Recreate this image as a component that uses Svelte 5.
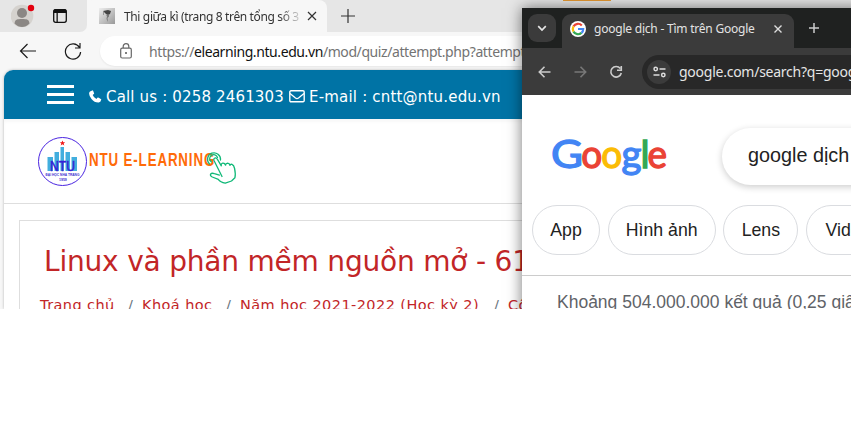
<script>
  const crumbs = [
    { label: 'Trang chủ', width: 74 },
    { label: 'Khoá học', width: 70 },
    { label: 'Năm học 2021-2022 (Học kỳ 2)', width: 240 },
    { label: 'Công nghệ thông tin', width: 170 }
  ];
  const chips = [
    { label: 'App', width: 68 },
    { label: 'Hình ảnh', width: 108 },
    { label: 'Lens', width: 75 },
    { label: 'Video', width: 84 }
  ];
</script>

<div class="desktop">
  <div class="task"></div>
  <section class="edge">
    <div class="strip">
      <div class="strip-left">
        <svg width="24" height="26" viewBox="0 0 24 26">
          <circle cx="11" cy="14" r="11.3" fill="#d5d2ce" />
          <circle cx="11" cy="11" r="5" fill="#8b8784" />
          <path d="M3.500 21.500C4 17.500 6 17 11 17s7 .5 7.500 4.500Q15 25 11 25t-7.500-3.500Z" fill="#8b8784" />
          <circle cx="20" cy="6" r="3.200" fill="#e3000f" />
        </svg>
        <svg class="workspace" width="16" height="16" viewBox="0 0 16 16">
          <rect x="1.700" y="1.700" width="12.600" height="12.600" rx="2" fill="none" stroke="#111" stroke-width="1.300" />
          <path d="M1.500 5V3q0-2 2-2h9q2 0 2 2v2ZM4.500 5h1.300v9H4.500Z" fill="#111" />
        </svg>
      </div>
      <div class="tab">
        <svg width="16" height="16" viewBox="0 0 16 16">
          <defs><linearGradient id="thumb" x2="1" y2="1"><stop stop-color="#eee" /><stop offset="1" stop-color="#999" /></linearGradient></defs>
          <path fill="url(#thumb)" d="M0 0h16v16H0z" />
          <path d="m4 3 5-1 3 1-1 3-2 1-2-1Z" fill="#444" />
          <path d="m7 7 3-.5v2L8.500 10 9 14l-1.500-3 .5-3Z" fill="#777" />
          <path d="M4.500 3v4" stroke="#888" stroke-width=".8" />
        </svg>
        <span class="tab-title">Thi giữa kì (trang 8 trên tổng số 3</span>
        <svg class="close" width="10" height="10" viewBox="0 0 10 10"><path d="M1 1l8 8M9 1 1 9" stroke="#333" stroke-width="1.200" /></svg>
      </div>
      <svg class="new" width="14" height="14" viewBox="0 0 14 14"><path d="M7 0v14M0 7h14" stroke="#333" stroke-width="1.200" /></svg>
    </div>
    <div class="address">
      <svg width="18" height="16" viewBox="0 0 18 16"><path d="M17 8H2M8.500 1 1.500 8l7 7" fill="none" stroke="#1b1b1b" stroke-width="1.200" /></svg>
      <svg class="reload" width="18" height="18" viewBox="0 0 18 18"><path d="M15.500 5.500A7.600 7.600 0 1 0 16.600 10M16 1v5h-5" fill="none" stroke="#1b1b1b" stroke-width="1.200" /></svg>
      <div class="url">
        <svg width="12" height="16" viewBox="0 0 12 16"><rect x=".7" y="5.200" width="10.600" height="9.800" rx="1.500" fill="none" stroke="#666" stroke-width="1.200" /><path d="M3.200 5V3.500a2.800 2.800 0 0 1 5.600 0V5" fill="none" stroke="#666" stroke-width="1.200" /><circle cx="6" cy="10" r="1" fill="#555" /></svg>
        <span>https://<b>elearning.ntu.edu.vn</b>/mod/quiz/attempt.php?attempt</span>
      </div>
    </div>
    <main class="site">
      <div class="contact">
        <div class="burger"><i></i><i></i><i></i></div>
        <svg class="phone" width="13" height="13" viewBox="0 0 13 13"><path d="M1 1.500 3.200.4q.6-.2.900.4l1 2.400q.2.500-.3.900l-1.100.9q1 2.700 3.700 3.900l1-1.100q.4-.5.900-.2l2.500 1.300q.6.300.4.900-.5 2.400-2.500 2.700Q5.500 12.700 2.500 9-.7 5 .4 2.300Z" fill="#fff" /></svg>
        <span class="call">Call us : 0258 2461303</span>
        <svg class="mail" width="16" height="13" viewBox="0 0 16 13"><rect x=".8" y=".8" width="14.400" height="11" rx="1.200" fill="none" stroke="#fff" stroke-width="1.400" /><path d="M1 3.500 6.500 8q1.500 1.100 3 0L15 3.500" fill="none" stroke="#fff" stroke-width="1.300" /></svg>
        <span class="email">E-mail : cntt@ntu.edu.vn</span>
      </div>
      <header>
        <svg width="202" height="54" viewBox="0 0 202 54">
          <circle cx="24.500" cy="25.500" r="24" fill="#fff" stroke="#4a25e0" stroke-width="1" />
          <path d="M9.500 35V21H15v14ZM16.500 35V16H21v19ZM22.500 35V11H26v24ZM27.500 35V16H32v19ZM33.500 35V21H39v14Z" fill="#42aede" />
          <path d="m24.500 4.500.8 1.700 1.900.1-1.500 1.200.6 1.900-1.800-1.100-1.800 1.100.6-1.900-1.500-1.200 1.900-.1Z" fill="#f01818" />
          <text x="12" y="34.500" font-size="14" fill="#371ed5" stroke="#371ed5" stroke-width=".5" textLength="25" lengthAdjust="spacingAndGlyphs">NTU</text>
          <text x="7.500" y="40" font-size="4.300" font-weight="700" fill="#4030d0" textLength="34" lengthAdjust="spacingAndGlyphs">ĐẠI HỌC NHA TRANG</text>
          <text x="21" y="44.500" font-size="3.500" font-weight="700" fill="#4030d0">1959</text>
          <g transform="translate(51 29.700) scale(.72 1)"><text font-size="18.500" font-weight="700" fill="#ff6b09" textLength="174" lengthAdjust="spacing">NTU E-LEARNING</text></g>
          <g fill="none" stroke="#10b978" stroke-width="1.300" stroke-linejoin="round" stroke-linecap="round">
            <path d="M171.500 28a6.500 6.500 0 1 1 11-4M173.500 26a4 4 0 1 1 6-4.500" />
            <path d="m184 41-8-16q-.7-2 1-2.500 1.500-.3 2.300 1.200l4 6.600q-.4-2.300 1.400-2.600 2.100-.2 2.900 2 .2-2 2-2 1.900.1 2.400 2.200.5-1.500 2-1 1.900.8 2.600 4.100 1.200 6 .3 9.300l-3.400 3.200-6.200 2.200q-5-1-7-3.900l-6-2.300q-2.700-1.400-1.600-3 1-1.300 3.700-.4l5 1.500" transform="translate(0 -.5)" />
          </g>
        </svg>
      </header>
      <article>
        <h1>Linux và phần mềm nguồn mở - 61</h1>
        <nav>
          {#each crumbs as crumb, i}
            {#if i}<span class="slash">/</span>{/if}
            <span class="crumb" style:width="{crumb.width}px">{crumb.label}</span>
          {/each}
        </nav>
      </article>
    </main>
  </section>

  <section class="chrome">
    <div class="chrome-strip">
      <div class="tab-search"><svg width="10" height="7" viewBox="0 0 10 7"><path d="m1.200 1.200 3.800 3.800 3.800-3.800" fill="none" stroke="#e5e5e5" stroke-width="1.700" /></svg></div>
      <div class="chrome-tab">
        <svg width="16" height="16" viewBox="0 0 16 16">
          <circle cx="8" cy="8" r="8" fill="#fff" />
          <g fill="none" stroke-width="2.200">
            <path d="M3.500 5.400A5.200 5.200 0 0 1 11.800 4.400" stroke="#ea4335" />
            <path d="M3.500 5.400a5.200 5.200 0 0 0 0 5.200" stroke="#fbbc05" />
            <path d="M3.500 10.600a5.200 5.200 0 0 0 8 1.300" stroke="#34a853" />
            <path d="M8 8h5.200q0 2.500-1.700 3.900" stroke="#4285f4" />
          </g>
        </svg>
        <span>google dịch - Tìm trên Google</span>
        <svg class="chrome-close" width="8" height="8" viewBox="0 0 8 8"><path d="m.5.500 7 7M7.500.5l-7 7" stroke="#ddd" stroke-width="1.400" /></svg>
      </div>
      <svg class="chrome-new" width="10" height="10" viewBox="0 0 10 10"><path d="M5 0v10M0 5h10" stroke="#ccc" stroke-width="1.500" /></svg>
    </div>
    <div class="toolbar">
      <svg width="13" height="12" viewBox="0 0 13 12"><path d="M12.500 6H1.500M6.500.8 1.300 6l5.200 5.200" fill="none" stroke="#ccc" stroke-width="1.600" /></svg>
      <svg class="forward" width="13" height="12" viewBox="0 0 13 12"><path d="M.5 6h11M6.500.8 11.700 6l-5.200 5.200" fill="none" stroke="#787878" stroke-width="1.600" /></svg>
      <svg class="refresh" width="14" height="14" viewBox="0 0 14 14"><path d="M11.300 3.500A5.300 5.300 0 1 0 12.300 8M12.300 1v4.200H8" fill="none" stroke="#ccc" stroke-width="1.600" /></svg>
      <div class="omnibox">
        <div class="tune"><svg width="13" height="12" viewBox="0 0 13 12"><g fill="none" stroke="#ddd" stroke-width="1.500"><circle cx="2.700" cy="3" r="1.700" /><path d="M6.500 3h6M.5 9h6" /><circle cx="10.300" cy="9" r="1.700" /></g></svg></div>
        <span>google.com/search?q=goog</span>
      </div>
    </div>
    <div class="results">
      <div class="query-row">
        <svg width="116" height="42" viewBox="0 0 116 42">
          <g font-size="38.500" stroke-width="1.300">
            <text y="32" x="-2" fill="#4285f4" stroke="#4285f4" textLength="32" lengthAdjust="spacingAndGlyphs">G</text>
            <text y="32" x="28.300" fill="#ea4335" stroke="#ea4335" textLength="21" lengthAdjust="spacingAndGlyphs">o</text>
            <text y="32" x="48.300" fill="#fbbc05" stroke="#fbbc05" textLength="21" lengthAdjust="spacingAndGlyphs">o</text>
            <text y="32" x="68.500" fill="#4285f4" stroke="#4285f4" textLength="20" lengthAdjust="spacingAndGlyphs">g</text>
            <text y="32" x="87.500" fill="#34a853" stroke="#34a853">l</text>
            <text y="32" x="94.500" fill="#ea4335" stroke="#ea4335" textLength="19.500" lengthAdjust="spacingAndGlyphs">e</text>
          </g>
        </svg>
        <div class="search">google dịch</div>
      </div>
      <div class="chips">
        {#each chips as chip}<div class="chip" style:width="{chip.width}px">{chip.label}</div>{/each}
      </div>
      <div class="stats">Khoảng 504.000.000 kết quả (0,25 giây)</div>
    </div>
  </section>
</div>

<style>
  :global(body) { background: #fff; }
  * { box-sizing: border-box; }
  svg { display: block; flex: none; }
  .desktop { position: relative; width: 851px; height: 309px; overflow: hidden; background: #e6e6e6; white-space: nowrap; }
  .task { position: absolute; z-index: 1; left: 563px; top: 0; width: 48px; height: 1px; background: #d18b2d; }
  .edge { height: 309px; background: #f7f7f7; display: flex; flex-direction: column; font-family: "Noto Sans", sans-serif; }
  .strip { height: 32px; background: linear-gradient(90deg, #f7f7f7 300px, #e6e6e6 300px); display: flex; flex: none; }
  .strip-left { width: 87px; background: #e6e6e6; border-bottom-right-radius: 7px; display: flex; padding: 2px 0 0 11px; }
  .workspace { margin: 6px 0 0 17px; }
  .tab { width: 240px; display: flex; align-items: center; padding-left: 12px; background: #f7f7f7; border-radius: 8px 8px 0 0; }
  .tab-title { width: 180px; margin-left: 9px; overflow: hidden; font-size: 12px; letter-spacing: -.36px; color: #333; mask-image: linear-gradient(90deg, #000 155px, transparent 180px); }
  .close { margin-left: 3px; }
  .new { margin: 9px 0 0 14px; }
  .address { height: 38px; flex: none; display: flex; align-items: center; padding-left: 19px; }
  .reload { margin-left: 27px; }
  .url { height: 30px; width: 760px; margin-left: 18px; padding-left: 20px; border-radius: 15px; background: #fff; display: flex; align-items: center; font-size: 14px; color: #737373; box-shadow: 0 1px 2px #0001; }
  .url span { margin-left: 17px; letter-spacing: -.41px; }
  .url b { font-weight: 400; color: #111; }
  .site { width: 850px; height: 239px; margin-left: 4px; border-radius: 9px 0 0; overflow: hidden; background: #fff; box-shadow: 0 0 3px #0004; font-family: Verdana, "DejaVu Sans", sans-serif; }
  .contact { height: 49px; background: #0073a5; display: flex; align-items: center; padding: 4px 0 0 43px; color: #fff; font-size: 15px; }
  .burger { width: 27px; height: 19px; display: flex; flex-direction: column; justify-content: space-between; margin-top: -4px; }
  .burger i { height: 3px; background: #fff; }
  .phone { margin-left: 15px; }
  .call { width: 178px; margin-left: 4px; letter-spacing: .16px; }
  .mail { margin-left: 5px; }
  .email { margin-left: 4px; letter-spacing: .19px; }
  header { height: 85px; border-bottom: 1px solid #dedede; padding: 17px 0 0 34px; box-shadow: inset 0 3px 3px #00000008; font-family: "Liberation Sans", sans-serif; }
  article { margin: 16px 0 0 15px; border: 1px solid #dedede; height: 120px; padding: 22px 0 0 20px; color: #c22527; }
  h1 { margin: 0 0 0 4px; font-size: 28px; line-height: 38px; font-weight: 400; letter-spacing: -.2px; }
  nav { display: flex; margin-top: 14px; font-size: 14.5px; line-height: 20px; letter-spacing: .42px; }
  .crumb { flex: none; }
  .slash { color: #6d7881; width: 28px; padding-left: 14px; flex: none; }
  .chrome { position: absolute; left: 522px; top: 8px; width: 360px; height: 310px; background: #fff; box-shadow: 0 0 14px #0008; font-family: "Noto Sans", sans-serif; }
  .chrome-strip { height: 40px; background: #1f2120; display: flex; padding: 6px 0 0 6px; color: #e3e3e3; }
  .tab-search { width: 28px; height: 28px; border-radius: 9px; background: #3b3b3b; display: grid; place-items: center; }
  .chrome-tab { width: 232px; height: 34px; margin-left: 6px; padding: 0 0 5px 8px; border-radius: 9px 9px 0 0; background: #3b3b3b; display: flex; align-items: center; font-size: 12px; }
  .chrome-tab span { width: 162px; margin-left: 8px; letter-spacing: -.22px; }
  .chrome-close { margin-left: 18px; }
  .chrome-new { margin: 9px 0 0 15px; }
  .toolbar { height: 47px; display: flex; align-items: center; background: #3b3b3b; padding-left: 16px; }
  .forward { margin-left: 23px; }
  .refresh { margin-left: 22px; }
  .omnibox { width: 230px; height: 34px; border-radius: 17px; background: #282828; display: flex; align-items: center; margin-left: 19px; padding-left: 5px; color: #e5e5e5; font-size: 14px; }
  .tune { width: 24px; height: 24px; border-radius: 50%; background: #3b3b3b; display: grid; place-items: center; flex: none; }
  .omnibox span { margin-left: 8px; letter-spacing: -.25px; }
  .results { font-family: Arial, "Liberation Sans", sans-serif; color: #222; }
  .query-row { height: 110px; padding: 33px 0 0 31px; display: flex; }
  .query-row svg { margin-top: 8px; overflow: visible; font-family: Lato, sans-serif; }
  .search { width: 200px; height: 57px; margin-left: 53px; padding: 15px 0 0 26px; border-radius: 29px; box-shadow: 0 2px 7px #0003; font-size: 19.8px; line-height: 24px; }
  .chips { height: 71px; display: flex; gap: 7.7px; padding-left: 10px; border-bottom: 1px solid #ccc; }
  .chip { height: 50px; border: 1px solid #dadce0; border-radius: 25px; text-align: center; line-height: 49px; font-size: 17.7px; flex: none; }
  .stats { padding: 16px 0 0 35px; font-size: 17.5px; line-height: 21px; color: #5f6368; }
</style>
